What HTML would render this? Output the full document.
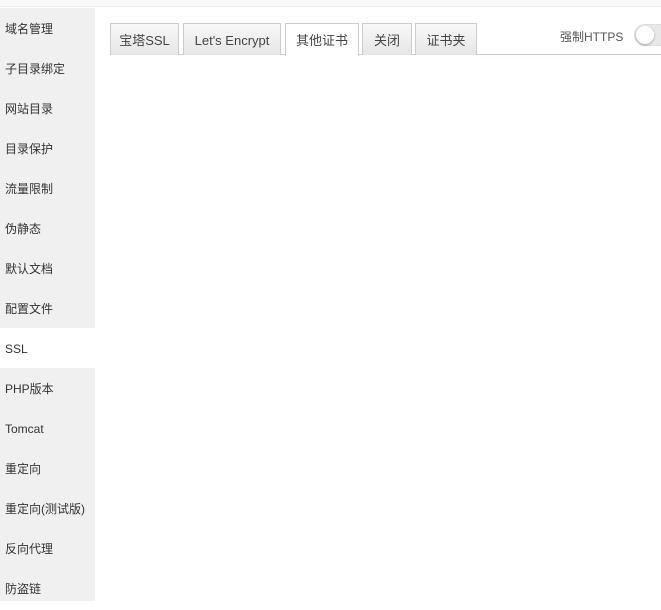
<!DOCTYPE html>
<html><head><meta charset="utf-8"><style>
*{margin:0;padding:0;box-sizing:border-box}
body{width:661px;height:601px;overflow:hidden;background:#fff;font-family:"Liberation Sans","Noto Sans CJK SC",sans-serif;font-size:12px;color:#333;position:relative}
.top{position:absolute;left:0;top:0;width:661px;height:7px;background:#f9f9f9;border-bottom:1px solid #eee}
.side{position:absolute;left:0;top:8px;width:95px;height:593px;background:#f0f0f0}
.side div{height:40px;line-height:42px;padding-left:5px;font-size:12px;color:#333}
.side div.on{background:#fff}
.tab{position:absolute;top:23px;height:32px;line-height:34px;text-align:center;border:1px solid #ccc;border-bottom:none;background:linear-gradient(#f8f8f8,#e6e6e6);font-size:13px;color:#444}
.tab.on{background:#fff;height:33px}
.line{position:absolute;left:110px;top:54px;width:551px;height:1px;background:#c9c9dd}
.lbl{position:absolute;left:560px;top:28px;font-size:12px;color:#555}
.tg{position:absolute;left:634px;top:24px;width:40px;height:22px;border-radius:11px;background:#e8e8e8;border:1px solid #ddd}
.tg:before{content:"";position:absolute;left:1px;top:1px;width:18px;height:18px;border-radius:50%;background:#fff;box-shadow:0 1px 2px rgba(0,0,0,.3)}
</style></head><body>
<div class="top"></div>
<div class="side">
<div>域名管理</div><div>子目录绑定</div><div>网站目录</div><div>目录保护</div><div>流量限制</div><div>伪静态</div><div>默认文档</div><div>配置文件</div><div class="on">SSL</div><div>PHP版本</div><div>Tomcat</div><div>重定向</div><div>重定向(测试版)</div><div>反向代理</div><div>防盗链</div>
</div>
<div class="line"></div>
<div class="tab" style="left:110px;width:69px">宝塔SSL</div>
<div class="tab" style="left:183px;width:98px">Let's Encrypt</div>
<div class="tab on" style="left:285px;width:74px">其他证书</div>
<div class="tab" style="left:362px;width:50px">关闭</div>
<div class="tab" style="left:415px;width:62px">证书夹</div>
<div class="lbl">强制HTTPS</div>
<div class="tg"></div>
</body></html>
